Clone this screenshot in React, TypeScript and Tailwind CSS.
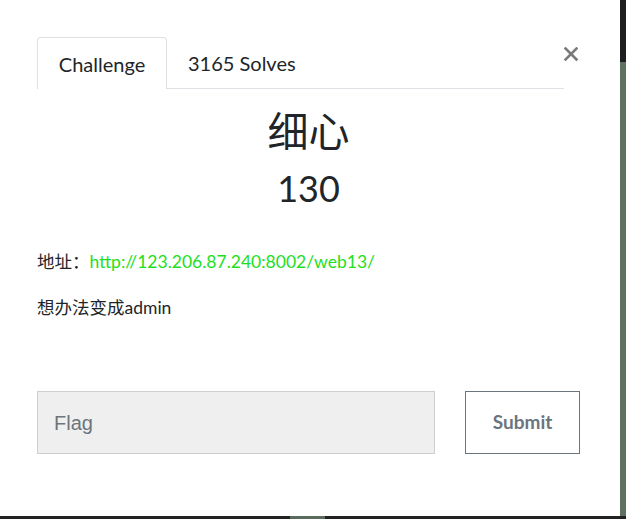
import React from "react";

export default function App() {
  const cjk = { fontFamily: 'Lato, "Noto Sans CJK SC", sans-serif' };
  return (
    <div className="w-[626px] h-[519px] bg-[#1f1f1f] flex flex-col overflow-hidden" style={cjk}>
      <div className="flex h-[516px]">
        <div className="w-[620px] h-[516px] bg-white pl-[37px] pr-[40px] pt-[37px] text-[#212529]">
          <div className="flex items-start">
            <div className="w-[527px] h-[52px] border-b border-[#dee2e6] flex items-end">
              <div className="h-[52px] w-[130px] border border-b-0 border-[#dee2e6] rounded-t-[4px] bg-white flex items-center justify-center text-[20px] text-[#212529] -mb-px">
                Challenge
              </div>
              <div className="h-[51px] flex items-center pl-[21px] text-[20px] text-[#212529]">
                3165 Solves
              </div>
            </div>
            <div className="ml-auto mt-[10px] mr-[2px] w-[14px] h-[14px]">
              <svg width="14" height="14" viewBox="0 0 14 14">
                <path d="M1.5 1.5 L12.5 12.5 M12.5 1.5 L1.5 12.5" stroke="#7a7a7a" strokeWidth="2.6" strokeLinecap="square" />
              </svg>
            </div>
          </div>
          <div className="text-center mt-[19px] text-[41px] leading-[48px] text-[#212529]" style={cjk}>
            细心
          </div>
          <div className="text-center mt-[10px] text-[36px] leading-[44px] text-[#212529]">130</div>
          <p className="mt-[39px] text-[17.5px] leading-[26px] text-[#212529]">
            地址：<span className="text-[#1ee01e]">http://123.206.87.240:8002/web13/</span>
          </p>
          <p className="mt-[20px] text-[17.5px] leading-[26px] text-[#212529]">想办法变成admin</p>
          <div className="flex mt-[70px]">
            <div className="w-[398px] h-[63px] bg-[#efefef] border border-[#cfcfcf] flex items-center pl-[16px] text-[20px] text-[#6c757d]" style={{ fontFamily: '"Liberation Sans", Arial, sans-serif' }}>
              Flag
            </div>
            <div className="ml-[30px] w-[115px] h-[63px] border border-[#6c757d] flex items-center justify-center text-[19px] font-bold text-[#6c757d]">
              Submit
            </div>
          </div>
        </div>
        <div className="w-[6px] flex flex-col">
          <div className="h-[62px] bg-[#1e1e1e]" />
          <div className="flex-1 bg-[#5f7262]" />
        </div>
      </div>
      <div className="h-[3px] flex">
        <div className="w-[290px] bg-[#222222]" />
        <div className="w-[35px] bg-[#5a6a5c]" />
        <div className="flex-1 bg-[#222222]" />
      </div>
    </div>
  );
}
